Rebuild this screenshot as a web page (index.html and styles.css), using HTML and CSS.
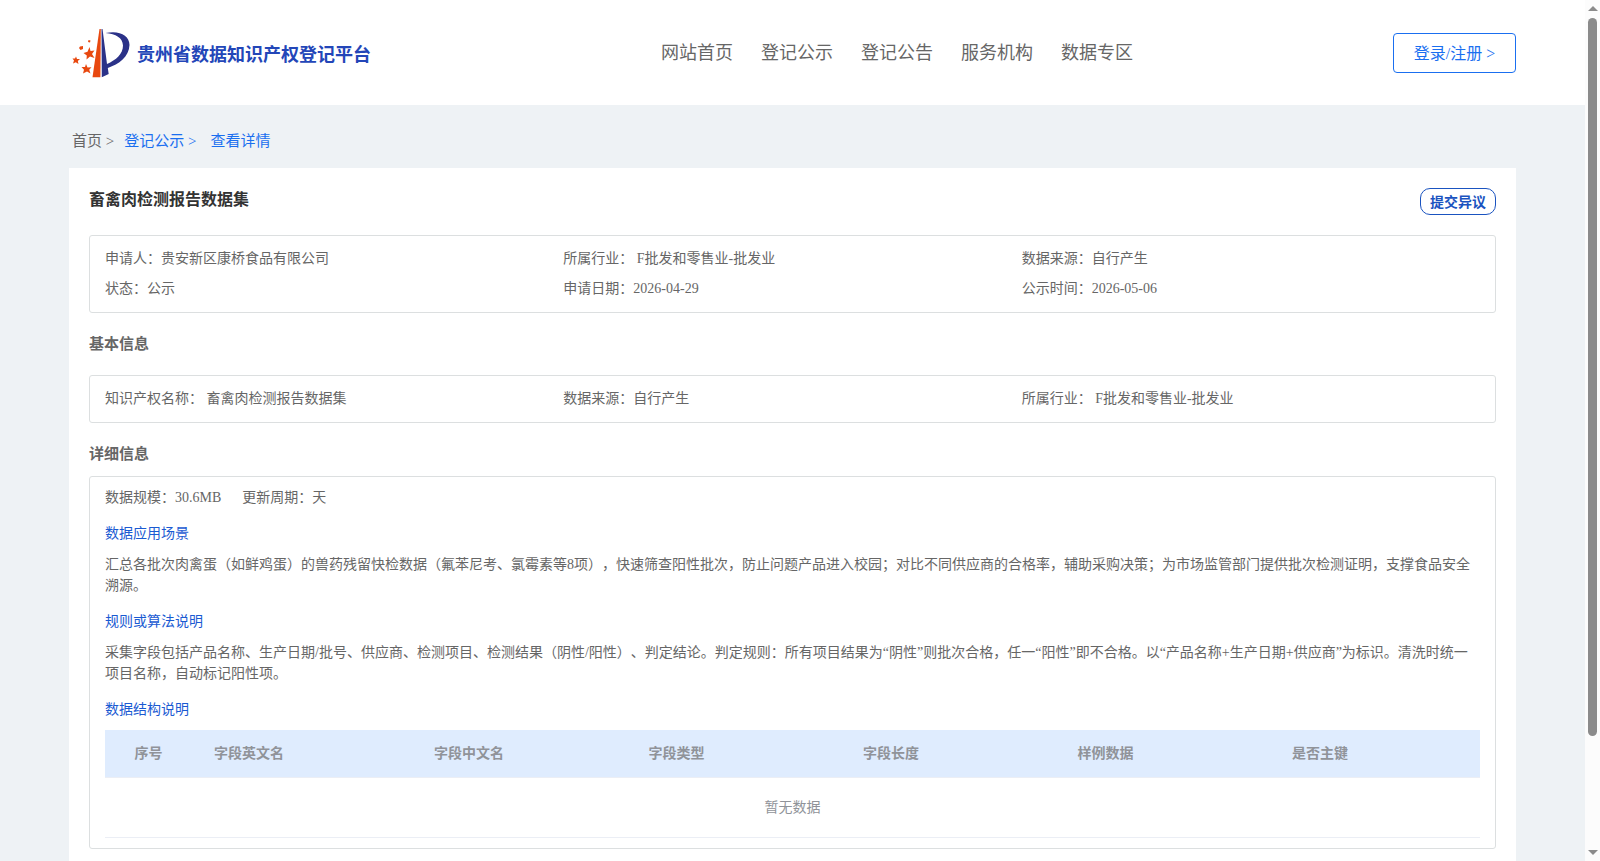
FILE: index.html
```html
<!DOCTYPE html>
<html lang="zh-CN">
<head>
    <meta charset="UTF-8">
    <meta name="viewport" content="width=device-width, initial-scale=1.0">
    <title>贵州省数据知识产权登记平台</title>
    <link rel="stylesheet" href="styles.css">
</head>
<body>
    <header class="header">
        <a class="logo" href="#">
            <svg class="logo-icon" viewBox="0 0 60 50" aria-hidden="true">
                <path d="M27.500 1 L28.800 1 L28.400 49.300 L20.500 49.300 Z" fill="#e8480f"/>
                <path d="M29.500 1 L30.500 1 L35 36 C44 32 51 26 51 17.500 C50.500 9.500 44 6 33.500 5 C47 2 57.500 7 57.500 17 C57 29 47 36 35.800 40 L36.700 46 L29.800 49.300 Z" fill="#2b3288"/>
                <g fill="#e8480f">
                    <path d="M17.500 19 L18.500 23 L22.500 22.500 L20 26 L22.500 30 L18 28.500 L14.500 31.500 L14.800 27.500 L11.500 25 L15.500 23.800 Z"/>
                    <path d="M14 36 L15.500 39.500 L19.500 39.300 L17.200 41.800 L18.500 45.500 L15 43.500 L11 45.500 L12 41.800 L9.500 39 L13 39 Z"/>
                    <path d="M4 28.500 L5 31 L8 31 L5.800 33 L6.500 36 L3.800 34.200 L1 35.500 L2 32.500 L0.500 30.500 L3 30.500 Z"/>
                    <path d="M8 18.500 L11 18 L11 21 L8.500 22 L7 20 Z"/>
                    <path d="M16.500 12 L18.500 12.500 L18 14.500 L16 14 Z"/>
                </g>
            </svg>
            <span class="logo-text">贵州省数据知识产权登记平台</span>
        </a>
        <nav class="nav">
            <a href="#">网站首页</a>
            <a href="#">登记公示</a>
            <a href="#">登记公告</a>
            <a href="#">服务机构</a>
            <a href="#">数据专区</a>
        </nav>
        <button class="login" type="button">登录/注册 &gt;</button>
    </header>

    <main class="main">
        <nav class="breadcrumb">
            <a class="home" href="#">首页 &gt;</a>
            <a href="#">登记公示 &gt;</a>
            <a class="current" href="#">查看详情</a>
        </nav>

        <div class="card">
            <div class="card-head">
                <h1>畜禽肉检测报告数据集</h1>
                <button class="objection" type="button">提交异议</button>
            </div>

            <div class="box info">
                <div>申请人：贵安新区康桥食品有限公司</div>
                <div>所属行业： F批发和零售业-批发业</div>
                <div>数据来源：自行产生</div>
                <div>状态：公示</div>
                <div>申请日期：2026-04-29</div>
                <div>公示时间：2026-05-06</div>
            </div>

            <h2>基本信息</h2>
            <div class="box info">
                <div>知识产权名称： 畜禽肉检测报告数据集</div>
                <div>数据来源：自行产生</div>
                <div>所属行业： F批发和零售业-批发业</div>
            </div>

            <h2 class="detail-title">详细信息</h2>
            <div class="box detail">
                <div class="meta">
                    <span>数据规模：30.6MB</span>
                    <span>更新周期：天</span>
                </div>
                <h3>数据应用场景</h3>
                <p>汇总各批次肉禽蛋（如鲜鸡蛋）的兽药残留快检数据（氟苯尼考、氯霉素等8项），快速筛查阳性批次，防止问题产品进入校园；对比不同供应商的合格率，辅助采购决策；为市场监管部门提供批次检测证明，支撑食品安全溯源。</p>
                <h3>规则或算法说明</h3>
                <p>采集字段包括产品名称、生产日期/批号、供应商、检测项目、检测结果（阴性/阳性）、判定结论。判定规则：所有项目结果为“阴性”则批次合格，任一“阳性”即不合格。以“产品名称+生产日期+供应商”为标识。清洗时统一项目名称，自动标记阳性项。</p>
                <h3>数据结构说明</h3>
                <table>
                    <colgroup>
                        <col class="col-index">
                        <col class="col-en">
                        <col class="col-field" span="4">
                        <col>
                    </colgroup>
                    <thead>
                        <tr>
                            <th class="index">序号</th>
                            <th>字段英文名</th>
                            <th>字段中文名</th>
                            <th>字段类型</th>
                            <th>字段长度</th>
                            <th>样例数据</th>
                            <th>是否主键</th>
                        </tr>
                    </thead>
                    <tbody>
                        <tr>
                            <td class="empty" colspan="7">暂无数据</td>
                        </tr>
                    </tbody>
                </table>
            </div>
        </div>
    </main>

    <div class="scrollbar" aria-hidden="true">
        <span class="arrow up"></span>
        <span class="track"><span class="thumb"></span></span>
        <span class="arrow down"></span>
    </div>
</body>
</html>
```
FILE: styles.css
```css
* {
    box-sizing: border-box;
}

html {
    scrollbar-width: none;
}

body {
    margin: 0;
    padding-right: 15px; /* room for the scrollbar */
    font-family: "Liberation Serif", "Noto Sans CJK SC", serif;
    font-size: 14px;
    color: #666;
    background: #eef2f5;
    text-spacing-trim: space-all;
}

a {
    color: inherit;
    text-decoration: none;
}

button {
    font-family: inherit;
    background: #fff;
    cursor: pointer;
}

/* Header */
.header {
    display: flex;
    align-items: center;
    height: 105px;
    padding: 0 69px;
    background: #fff;
}

.logo {
    display: flex;
    align-items: center;
    gap: 5px;
    width: 332px;
    padding-left: 3px;
}

.logo-icon {
    width: 60px;
    height: 50px;
}

.logo-text {
    font-size: 18px;
    font-weight: bold;
    color: #2346b8;
}

.nav {
    display: flex;
    flex: 1;
    justify-content: center;
    gap: 28px;
    padding-bottom: 4px;
    font-size: 18px;
}

.login {
    width: 123px;
    height: 40px;
    padding: 0 0 2px;
    font-size: 16px;
    color: #1a6ff0;
    border: 1px solid #1a6ff0;
    border-radius: 4px;
}

/* Content */
.main {
    padding: 0 69px 40px;
}

.breadcrumb {
    display: flex;
    align-items: center;
    height: 63px;
    padding: 6px 3px 0;
    font-size: 15px;
    color: #1a6ff0;
}

.breadcrumb .home {
    margin-right: 10px;
    color: #666;
}

.breadcrumb .current {
    margin-left: 14px;
}

.card {
    padding: 20px 20px 64px;
    background: #fff;
}

.card-head {
    display: flex;
    justify-content: space-between;
    align-items: flex-start;
    height: 47px;
}

h1 {
    margin: 0;
    font-size: 16px;
    line-height: 24px;
    color: #333;
}

.objection {
    width: 76px;
    height: 27px;
    padding: 0 0 2px;
    font-size: 14px;
    font-weight: bold;
    color: #1a53c0;
    border: 1px solid #1a53c0;
    border-radius: 10px;
}

.box {
    padding: 8px 15px;
    border: 1px solid #dcdfe0;
    border-radius: 3px;
}

.info {
    display: grid;
    grid-template-columns: repeat(3, 1fr);
    line-height: 30px;
}

h2 {
    margin: 20px 0;
    font-size: 15px;
    line-height: 22px;
}

.detail-title {
    margin-bottom: 11px;
}

.detail {
    padding: 10px 15px;
    line-height: 21px;
}

.meta {
    display: flex;
    gap: 21px;
}

h3 {
    margin: 15px 0 10px;
    font-size: 14px;
    font-weight: normal;
    color: #1a5ad2;
}

p {
    margin: 0;
}

/* Field table */
table {
    width: 100%;
    table-layout: fixed;
    border-collapse: separate;
    border-spacing: 0;
    color: #909399;
}

.col-index {
    width: 7.2%;
}

.col-en {
    width: 16%;
}

.col-field {
    width: 15.6%;
}

th {
    height: 48px;
    padding: 0 10px;
    text-align: left;
    background: #dfecfe;
    border-bottom: 1px solid #ebeef5;
}

th.index {
    padding: 0 12px 0 0;
    text-align: center;
}

.empty {
    height: 60px;
    padding: 0;
    text-align: center;
    border-bottom: 1px solid #ebeef5;
}

/* Scrollbar */
.scrollbar {
    position: fixed;
    top: 0;
    right: 0;
    bottom: 0;
    display: flex;
    flex-direction: column;
    align-items: center;
    width: 15px;
    padding: 6px 0;
    background: #fcfcfc;
}

.arrow {
    border: 5px solid transparent;
}

.arrow.up {
    border-top: 0;
    border-bottom-color: #8b8b8b;
}

.arrow.down {
    border-bottom: 0;
    border-top-color: #8b8b8b;
}

.track {
    flex: 1;
    width: 9px;
    margin: 7px 0;
}

.thumb {
    display: block;
    height: 87%;
    background: #8b8b8b;
    border-radius: 5px;
}
```
